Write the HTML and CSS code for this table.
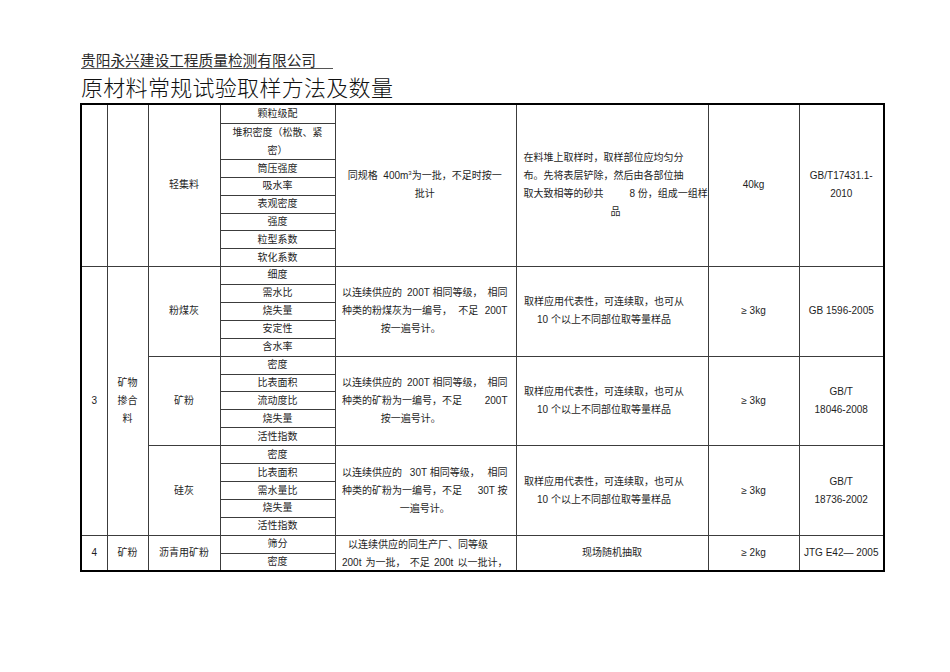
FILE: index.html
```html
<!DOCTYPE html>
<html lang="zh-CN">
<head>
<meta charset="utf-8">
<title>原材料常规试验取样方法及数量</title>
<link rel="stylesheet" href="styles.css">
</head>
<body>
<div class="page">
  <div class="company">贵阳永兴建设工程质量检测有限公司</div>
  <h1 class="title">原材料常规试验取样方法及数量</h1>
  <table class="sheet">
    <colgroup>
      <col class="c1"><col class="c2"><col class="c3"><col class="c4">
      <col class="c5"><col class="c6"><col class="c7"><col class="c8">
    </colgroup>
    <tbody>
      <tr class="h-first">
        <td rowspan="8"></td>
        <td rowspan="8"></td>
        <td rowspan="8">轻集料</td>
        <td>颗粒级配</td>
        <td rowspan="8" class="spec"><span class="ln">同规格&nbsp; 400m<sup>3</sup>为一批，不足时按一</span><span class="ln">批计</span></td>
        <td rowspan="8" class="method-left">
          <span class="ln">在料堆上取样时，取样部位应均匀分</span>
          <span class="ln">布。先将表层铲除，然后由各部位抽</span>
          <span class="ln">取大致相等的砂共<span class="gap-26">8 份，组成一组样</span></span>
          <span class="ln ctr">品</span>
        </td>
        <td rowspan="8" class="qty">40kg</td>
        <td rowspan="8"><span class="ln">GB/T17431.1-</span><span class="ln">2010</span></td>
      </tr>
      <tr class="h-double"><td class="two"><span class="ln">堆积密度（松散、紧</span><span class="ln">密）</span></td></tr>
      <tr class="h-a"><td>筒压强度</td></tr>
      <tr class="h-a"><td>吸水率</td></tr>
      <tr class="h-a"><td>表观密度</td></tr>
      <tr class="h-a"><td>强度</td></tr>
      <tr class="h-a"><td>粒型系数</td></tr>
      <tr class="h-a"><td>软化系数</td></tr>

      <tr class="h-b">
        <td rowspan="15">3</td>
        <td rowspan="15"><span class="ln">矿物</span><span class="ln">掺合</span><span class="ln">料</span></td>
        <td rowspan="5">粉煤灰</td>
        <td>细度</td>
        <td rowspan="5" class="spec">
          <span class="ln jl"><span>以连续供应的</span><span>200T 相同等级，</span><span>相同</span></span>
          <span class="ln jl"><span>种类的粉煤灰为一编号，</span><span>不足</span><span>200T</span></span>
          <span class="ln off">按一遍号计。</span>
        </td>
        <td rowspan="5" class="method"><span class="ln">取样应用代表性，可连续取，也可从</span><span class="ln">10 个以上不同部位取等量样品</span></td>
        <td rowspan="5" class="qty">≥ 3kg</td>
        <td rowspan="5">GB 1596-2005</td>
      </tr>
      <tr class="h-b"><td>需水比</td></tr>
      <tr class="h-b"><td>烧失量</td></tr>
      <tr class="h-b"><td>安定性</td></tr>
      <tr class="h-b"><td>含水率</td></tr>

      <tr class="h-b">
        <td rowspan="5">矿粉</td>
        <td>密度</td>
        <td rowspan="5" class="spec">
          <span class="ln jl"><span>以连续供应的</span><span>200T 相同等级，</span><span>相同</span></span>
          <span class="ln jl"><span>种类的矿粉为一编号，不足</span><span>200T</span></span>
          <span class="ln off">按一遍号计。</span>
        </td>
        <td rowspan="5" class="method"><span class="ln">取样应用代表性，可连续取，也可从</span><span class="ln">10 个以上不同部位取等量样品</span></td>
        <td rowspan="5" class="qty">≥ 3kg</td>
        <td rowspan="5"><span class="ln">GB/T</span><span class="ln">18046-2008</span></td>
      </tr>
      <tr class="h-b"><td>比表面积</td></tr>
      <tr class="h-b"><td>流动度比</td></tr>
      <tr class="h-b"><td>烧失量</td></tr>
      <tr class="h-b"><td>活性指数</td></tr>

      <tr class="h-b">
        <td rowspan="5">硅灰</td>
        <td>密度</td>
        <td rowspan="5" class="spec">
          <span class="ln jl"><span>以连续供应的</span><span>30T 相同等级，</span><span>相同</span></span>
          <span class="ln jl"><span>种类的矿粉为一编号，不足</span><span>30T 按</span></span>
          <span class="ln">一遍号计。</span>
        </td>
        <td rowspan="5" class="method"><span class="ln">取样应用代表性，可连续取，也可从</span><span class="ln">10 个以上不同部位取等量样品</span></td>
        <td rowspan="5" class="qty">≥ 3kg</td>
        <td rowspan="5"><span class="ln">GB/T</span><span class="ln">18736-2002</span></td>
      </tr>
      <tr class="h-b"><td>比表面积</td></tr>
      <tr class="h-b"><td>需水量比</td></tr>
      <tr class="h-b"><td>烧失量</td></tr>
      <tr class="h-b"><td>活性指数</td></tr>

      <tr class="h-c">
        <td rowspan="2">4</td>
        <td rowspan="2">矿粉</td>
        <td rowspan="2">沥青用矿粉</td>
        <td>筛分</td>
        <td rowspan="2" class="spec top">
          <div class="clip">
            <span class="ln indent">以连续供应的同生产厂、同等级</span>
            <span class="ln jl"><span>200t</span><span>为一批，</span><span>不足</span><span>200t</span><span>以一批计，</span></span>
          </div>
        </td>
        <td rowspan="2">现场随机抽取</td>
        <td rowspan="2" class="qty">≥ 2kg</td>
        <td rowspan="2">JTG E42— 2005</td>
      </tr>
      <tr class="h-d"><td>密度</td></tr>
    </tbody>
  </table>
</div>
</body>
</html>
```

FILE: styles.css
```css
* { box-sizing: border-box; }
html, body { margin: 0; padding: 0; background: #fff; }
body {
  font-family: "Liberation Sans", "Noto Sans CJK SC", sans-serif;
  color: #1e1e1e;
}
.page { padding: 53px 0 0 80px; }

.company {
  width: max-content;
  margin-left: 1px;
  font-family: "Noto Sans CJK SC", sans-serif;
  font-size: 14.7px;
  line-height: 14.7px;
  padding-right: 17px;
  border-bottom: 1px solid #555;
  color: #2a2a2a;
}
.title {
  margin: 6px 0 6px 1px;
  font-family: "Noto Sans CJK SC", sans-serif;
  font-weight: 300;
  font-size: 22px;
  line-height: 22px;
  letter-spacing: 0.3px;
  color: #111;
}

.sheet {
  border-collapse: collapse;
  table-layout: fixed;
  width: 803px;
  border: 2px solid #000;
}
.c1 { width: 26px; }
.c2 { width: 41px; }
.c3 { width: 72px; }
.c4 { width: 115px; }
.c5 { width: 181px; }
.c6 { width: 192px; }
.c7 { width: 91px; }
.c8 { width: 85px; }

.sheet td {
  border: 1px solid #3c3c3c;
  padding: 0;
  text-align: center;
  vertical-align: middle;
  font-size: 10px;
  line-height: 14px;
  color: #1e1e1e;
}
.h-first { height: 20px; }
.h-double { height: 35.3px; }
.h-a { height: 17.8px; }
.h-b { height: 17.93px; }
.h-c { height: 18.3px; }
.h-d { height: 17.3px; }

.ln { display: block; line-height: 18px; white-space: nowrap; }
.two .ln { line-height: 17.5px; }
.jl { display: flex; justify-content: space-between; }
.ctr { text-align: center; }
.off { padding-right: 28px; }
.indent { padding-left: 6px; text-align: left; }

.sheet td.spec { padding: 0 8px 0 6.5px; }
.sheet td.top { vertical-align: top; }
.clip { height: 34px; overflow: hidden; }

.sheet td.method { padding-right: 16px; }
.sheet td.method-left { text-align: left; padding-left: 7px; }
.gap-26 { margin-left: 26px; }
.qty { padding-left: 6px; }

sup {
  font-size: 6px;
  line-height: 0;
  vertical-align: 4px;
}
```
